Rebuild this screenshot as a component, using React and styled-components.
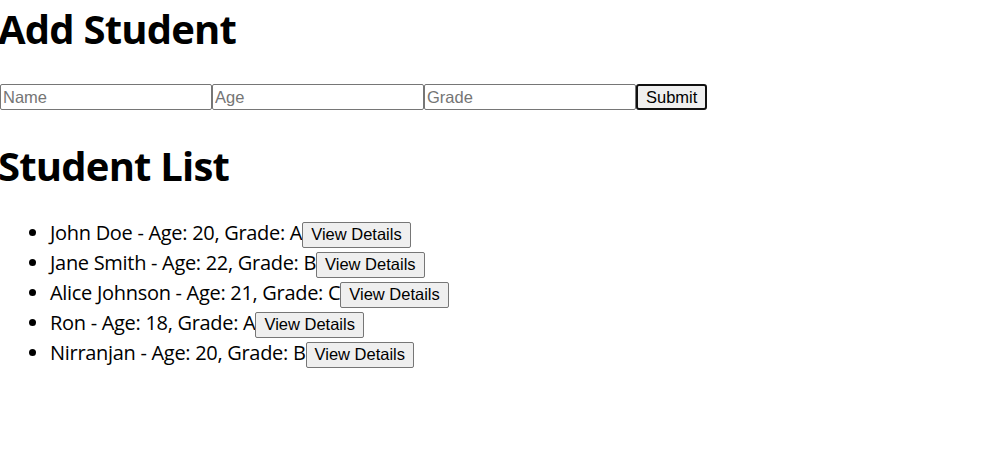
import React from 'react'
import styled, { createGlobalStyle } from 'styled-components'

const students = [
  { name: 'John Doe', age: 20, grade: 'A' },
  { name: 'Jane Smith', age: 22, grade: 'B' },
  { name: 'Alice Johnson', age: 21, grade: 'C' },
  { name: 'Ron', age: 18, grade: 'A' },
  { name: 'Nirranjan', age: 20, grade: 'B' },
]

export default function App() {
  return (
    <Page>
      <GlobalStyle />
      <Title>Add Student</Title>
      <Form onSubmit={(e) => e.preventDefault()}>
        <Field placeholder='Name' />
        <Field placeholder='Age' />
        <Field placeholder='Grade' />
        <SubmitButton type='submit'>Submit</SubmitButton>
      </Form>
      <ListTitle>Student List</ListTitle>
      <List>
        {students.map((s) => (
          <Item key={s.name}>
            {s.name} - Age: {s.age}, Grade: {s.grade}
            <DetailsButton>View Details</DetailsButton>
          </Item>
        ))}
      </List>
    </Page>
  )
}

const GlobalStyle = createGlobalStyle`
    body {
        margin: 0;
        background: #ffffff;
        color: #000000;
        font-family: "Open Sans", "Noto Sans", sans-serif;
    }
`

const Page = styled.div`
    display: flex;
    flex-direction: column;
    align-items: flex-start;
`

const Title = styled.h1`
    font-size: 40px;
    font-weight: bold;
    line-height: 54px;
    margin: 2px 0 0 -2px;
    letter-spacing: -0.8px;
`

const ListTitle = styled(Title)`
    margin-top: 29px;
`

const Form = styled.form`
    display: flex;
    align-items: center;
    margin-top: 28px;
`

const Field = styled.input`
    width: 212px;
    height: 26px;
    box-sizing: border-box;
    border: 1px solid #767676;
    border-radius: 2px;
    padding: 0 2px;
    font-family: "Liberation Sans", Arial, sans-serif;
    font-size: 16.5px;
    color: #000;
    &::placeholder {
        color: #757575;
    }
`

const SubmitButton = styled.button`
    height: 26px;
    box-sizing: border-box;
    padding: 0 8px;
    background: #efefef;
    border: 2px solid #101010;
    border-radius: 3px;
    font-family: "Liberation Sans", Arial, sans-serif;
    font-size: 16.5px;
    color: #000;
`

const List = styled.ul`
    margin: 25px 0 0;
    padding-left: 50px;
`

const Item = styled.li`
    font-size: 20px;
    line-height: 30px;
    letter-spacing: -0.3px;
`

const DetailsButton = styled.button`
    height: 26px;
    box-sizing: border-box;
    padding: 0 8px;
    background: #efefef;
    border: 1px solid #767676;
    border-radius: 2px;
    font-family: "Liberation Sans", Arial, sans-serif;
    font-size: 16.5px;
    letter-spacing: 0;
    color: #000;
    vertical-align: middle;
`
